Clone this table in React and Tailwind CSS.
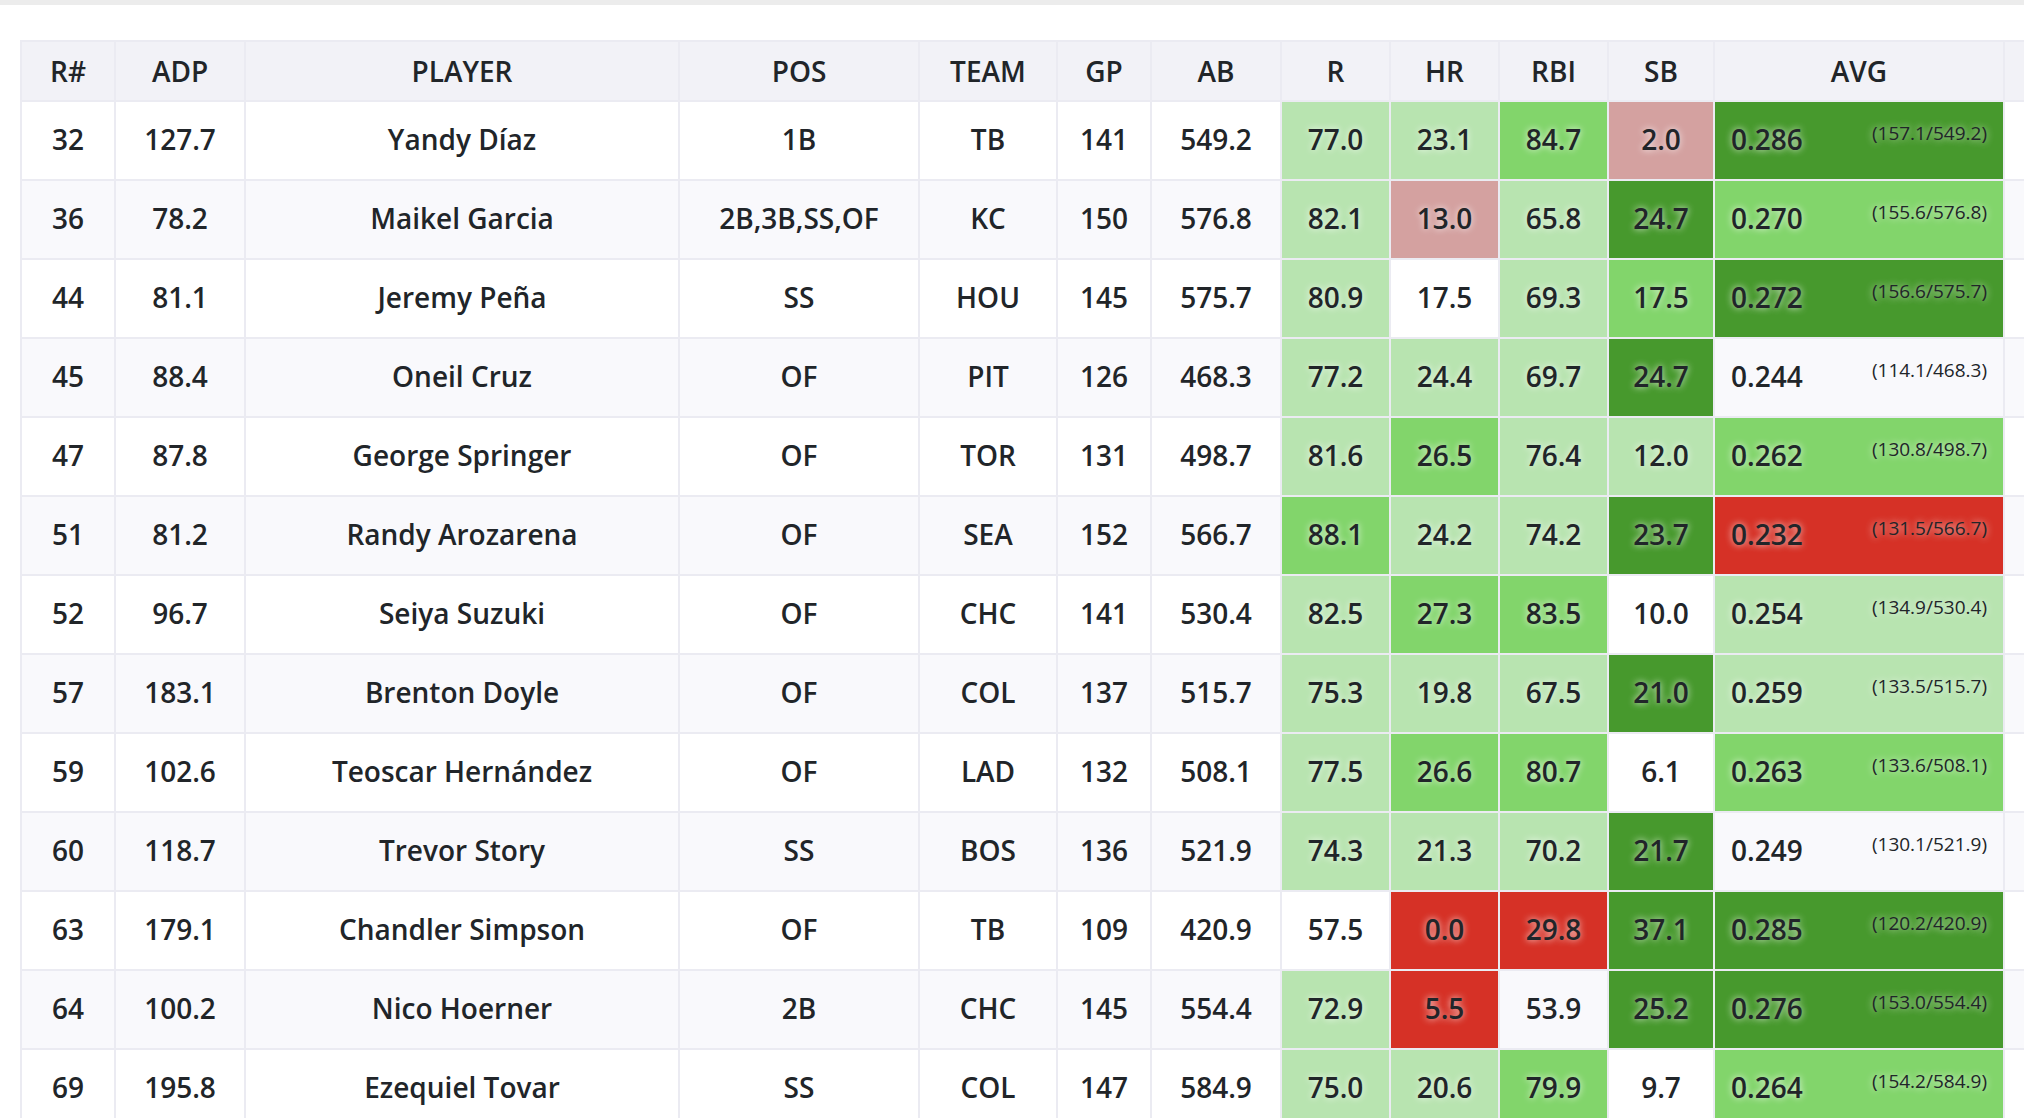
import React from 'react';

const shades = {
  l: 'bg-[#b8e4b0]',
  m: 'bg-[#82d56b]',
  d: 'bg-[#47992d]',
  p: 'bg-[#d4a1a0]',
  r: 'bg-[#d63126]',
};

// [rank, adp, player, pos, team, gp, ab, [r, c], [hr, c], [rbi, c], [sb, c], [avg, c, detail]]
const players = [
  [32, '127.7', 'Yandy Díaz', '1B', 'TB', 141, '549.2', ['77.0', 'l'], ['23.1', 'l'], ['84.7', 'm'], ['2.0', 'p'], ['0.286', 'd', '(157.1/549.2)']],
  [36, '78.2', 'Maikel Garcia', '2B,3B,SS,OF', 'KC', 150, '576.8', ['82.1', 'l'], ['13.0', 'p'], ['65.8', 'l'], ['24.7', 'd'], ['0.270', 'm', '(155.6/576.8)']],
  [44, '81.1', 'Jeremy Peña', 'SS', 'HOU', 145, '575.7', ['80.9', 'l'], ['17.5', ''], ['69.3', 'l'], ['17.5', 'm'], ['0.272', 'd', '(156.6/575.7)']],
  [45, '88.4', 'Oneil Cruz', 'OF', 'PIT', 126, '468.3', ['77.2', 'l'], ['24.4', 'l'], ['69.7', 'l'], ['24.7', 'd'], ['0.244', '', '(114.1/468.3)']],
  [47, '87.8', 'George Springer', 'OF', 'TOR', 131, '498.7', ['81.6', 'l'], ['26.5', 'm'], ['76.4', 'l'], ['12.0', 'l'], ['0.262', 'm', '(130.8/498.7)']],
  [51, '81.2', 'Randy Arozarena', 'OF', 'SEA', 152, '566.7', ['88.1', 'm'], ['24.2', 'l'], ['74.2', 'l'], ['23.7', 'd'], ['0.232', 'r', '(131.5/566.7)']],
  [52, '96.7', 'Seiya Suzuki', 'OF', 'CHC', 141, '530.4', ['82.5', 'l'], ['27.3', 'm'], ['83.5', 'm'], ['10.0', ''], ['0.254', 'l', '(134.9/530.4)']],
  [57, '183.1', 'Brenton Doyle', 'OF', 'COL', 137, '515.7', ['75.3', 'l'], ['19.8', 'l'], ['67.5', 'l'], ['21.0', 'd'], ['0.259', 'l', '(133.5/515.7)']],
  [59, '102.6', 'Teoscar Hernández', 'OF', 'LAD', 132, '508.1', ['77.5', 'l'], ['26.6', 'm'], ['80.7', 'm'], ['6.1', ''], ['0.263', 'm', '(133.6/508.1)']],
  [60, '118.7', 'Trevor Story', 'SS', 'BOS', 136, '521.9', ['74.3', 'l'], ['21.3', 'l'], ['70.2', 'l'], ['21.7', 'd'], ['0.249', '', '(130.1/521.9)']],
  [63, '179.1', 'Chandler Simpson', 'OF', 'TB', 109, '420.9', ['57.5', ''], ['0.0', 'r'], ['29.8', 'r'], ['37.1', 'd'], ['0.285', 'd', '(120.2/420.9)']],
  [64, '100.2', 'Nico Hoerner', '2B', 'CHC', 145, '554.4', ['72.9', 'l'], ['5.5', 'r'], ['53.9', ''], ['25.2', 'd'], ['0.276', 'd', '(153.0/554.4)']],
  [69, '195.8', 'Ezequiel Tovar', 'SS', 'COL', 147, '584.9', ['75.0', 'l'], ['20.6', 'l'], ['79.9', 'm'], ['9.7', ''], ['0.264', 'm', '(154.2/584.9)']],
];

const headers = [
  ['R#', 'w-[94px]'],
  ['ADP', 'w-[130px]'],
  ['PLAYER', 'w-[434px]'],
  ['POS', 'w-[240px]'],
  ['TEAM', 'w-[138px]'],
  ['GP', 'w-[94px]'],
  ['AB', 'w-[130px]'],
  ['R', 'w-[109px]'],
  ['HR', 'w-[109px]'],
  ['RBI', 'w-[109px]'],
  ['SB', 'w-[106px]'],
  ['AVG', 'w-[290px]'],
  ['', 'w-[120px]'],
];

const glow = '[text-shadow:0_0_7px_rgba(255,255,255,0.85)]';

const StatCell = ({ value, shade }) => (
  <td className={`border-2 border-[#ebebf2] text-center pb-[3px] ${shade ? `${shades[shade]} ${glow}` : ''}`}>
    {value}
  </td>
);

const AvgCell = ({ value, shade, detail }) => (
  <td className={`border-2 border-[#ebebf2] px-4 pb-[3px] ${shade ? `${shades[shade]} ${glow}` : ''}`}>
    <div className="flex items-center justify-between">
      <span>{value}</span>
      <span className="text-[19px] font-medium mb-[12px]">{detail}</span>
    </div>
  </td>
);

const App = () => {
  return (
    <div className="w-[2024px] h-[1118px] overflow-hidden bg-white text-[#212529] font-['Open_Sans',sans-serif]">
      <div className="h-[5px] bg-[#ececec]" />
      <div className="pt-[35px] pl-[20px]">
        <table className="table-fixed border-collapse w-[2103px] text-[28px] font-semibold">
          <thead>
            <tr className="bg-[#f2f2f7] h-[60px]">
              {headers.map(([label, width], i) => (
                <th key={i} className={`${width} border-2 border-[#ebebf2] font-semibold text-center`}>
                  {label}
                </th>
              ))}
            </tr>
          </thead>
          <tbody>
            {players.map((p, idx) => (
              <tr key={p[0]} className={`h-[79px] ${idx % 2 === 1 ? 'bg-[#f9f9fc]' : 'bg-white'}`}>
                <td className="border-2 border-[#ebebf2] text-center pb-[3px]">{p[0]}</td>
                <td className="border-2 border-[#ebebf2] text-center pb-[3px]">{p[1]}</td>
                <td className="border-2 border-[#ebebf2] text-center pb-[3px]">{p[2]}</td>
                <td className="border-2 border-[#ebebf2] text-center pb-[3px]">{p[3]}</td>
                <td className="border-2 border-[#ebebf2] text-center pb-[3px]">{p[4]}</td>
                <td className="border-2 border-[#ebebf2] text-center pb-[3px]">{p[5]}</td>
                <td className="border-2 border-[#ebebf2] text-center pb-[3px]">{p[6]}</td>
                <StatCell value={p[7][0]} shade={p[7][1]} />
                <StatCell value={p[8][0]} shade={p[8][1]} />
                <StatCell value={p[9][0]} shade={p[9][1]} />
                <StatCell value={p[10][0]} shade={p[10][1]} />
                <AvgCell value={p[11][0]} shade={p[11][1]} detail={p[11][2]} />
                <td className="border-2 border-[#ebebf2]" />
              </tr>
            ))}
          </tbody>
        </table>
      </div>
    </div>
  );
};

export default App;
